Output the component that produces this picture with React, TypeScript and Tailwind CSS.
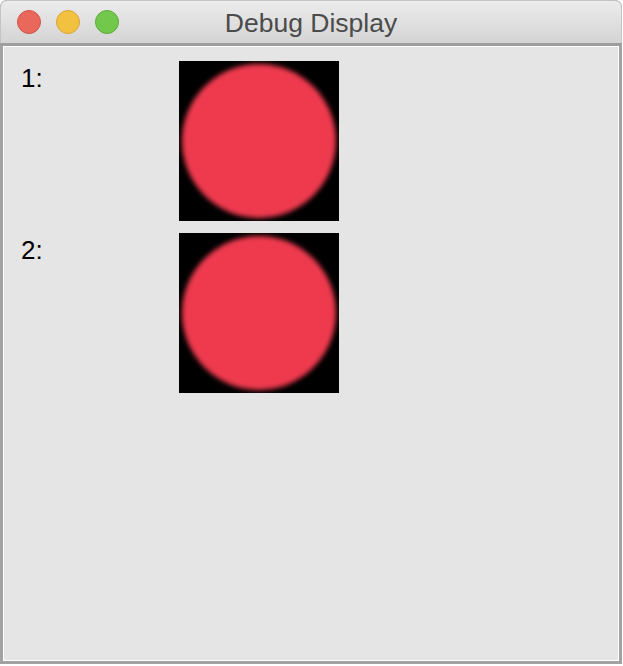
import React from "react";

function Light({ bg, border }: { bg: string; border: string }) {
  return <div className={`w-[24px] h-[24px] rounded-full border ${bg} ${border}`} />;
}

function Ball() {
  return (
    <div className="w-[160px] h-[160px] bg-black flex items-center justify-center overflow-hidden">
      <div className="w-[154px] h-[154px] rounded-full bg-[#ef3a4e] blur-[2.4px]" />
    </div>
  );
}

function Row({ label }: { label: string }) {
  return (
    <div className="flex pl-[17px]">
      <div className="w-[158px] mt-[4px] text-[26px] leading-[26px] text-black" style={{ fontFamily: '"Liberation Sans", Arial, sans-serif' }}>
        {label}
      </div>
      <Ball />
    </div>
  );
}

export default function App() {
  return (
    <div className="w-[623px] h-[666px] bg-white">
      <div className="w-[622px] h-[664px] flex flex-col rounded-t-[7px] overflow-hidden bg-[#a2a2a2]">
        <div className="h-[43px] shrink-0 grid grid-cols-[1fr_auto_1fr] items-center bg-gradient-to-b from-[#ececec] to-[#d4d4d4] border-x border-t border-[#c4c4c4] rounded-t-[7px]">
          <div className="flex items-center gap-[15px] pl-[16px]">
            <Light bg="bg-[#e9685b]" border="border-[#d0574b]" />
            <Light bg="bg-[#f3c140]" border="border-[#d9a53a]" />
            <Light bg="bg-[#72c84a]" border="border-[#5eab3d]" />
          </div>
          <div className="text-[26.5px] leading-none text-[#4b4b4b] pt-[3px]" style={{ fontFamily: '"Liberation Sans", Arial, sans-serif' }}>
            Debug Display
          </div>
          <div />
        </div>
        <div className="h-[3px] shrink-0 bg-[#9e9e9e]" />
        <div className="flex-1 mx-[3px] mb-[3px] border border-white bg-[#e5e5e5] flex flex-col gap-[12px] pt-[14px]">
          <Row label="1:" />
          <Row label="2:" />
        </div>
      </div>
    </div>
  );
}
